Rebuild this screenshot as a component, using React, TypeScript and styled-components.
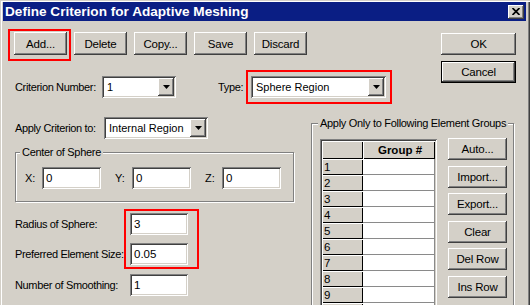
import React from 'react';
import styled, { createGlobalStyle, css } from 'styled-components';

const FACE = '#d4d0c8';

const raised = css`
  box-shadow: inset -1px -1px 0 #404040, inset 1px 1px 0 #ffffff,
    inset -2px -2px 0 #808080, inset 2px 2px 0 ${FACE};
`;

const sunken = css`
  box-shadow: inset 1px 1px 0 #808080, inset -1px -1px 0 #ffffff,
    inset 2px 2px 0 #404040, inset -2px -2px 0 ${FACE};
`;

const GlobalStyle = createGlobalStyle`
  * { box-sizing: border-box; }
  html, body {
    margin: 0;
    padding: 0;
    overflow: hidden;
    background: ${FACE};
  }
  body {
    font-family: "Liberation Sans", Arial, sans-serif;
    font-size: 11px;
    color: #000;
  }
`;

const Window = styled.div`
  width: 530px;
  height: 330px;
  background: ${FACE};
  padding: 2px 4px 0 3px;
  box-shadow: inset 1px 1px 0 ${FACE}, inset 2px 2px 0 #ffffff,
    inset -1px -1px 0 #404040, inset -2px -2px 0 #808080;
`;

const TitleBar = styled.div`
  height: 19px;
  background: #0a1e84;
  display: flex;
  align-items: center;
  justify-content: space-between;
  padding: 0 2px;
`;

const TitleText = styled.span`
  color: #ffffff;
  font-weight: bold;
  font-size: 13.6px;
  line-height: 19px;
`;

const CloseButton = styled.div`
  width: 16px;
  height: 14px;
  background: ${FACE};
  ${raised};
  display: flex;
  align-items: center;
  justify-content: center;
`;

const Content = styled.div`
  padding: 0 10px 0 12px;
`;

const TopArea = styled.div`
  display: flex;
  align-items: flex-start;
`;

const LeftTop = styled.div`
  display: flex;
  flex-direction: column;
`;

const Toolbar = styled.div`
  display: flex;
  gap: 7px;
  margin: 11px 0 0 -1px;
`;

const Button = styled.div<{ $w?: number; $h?: number; $default?: boolean }>`
  width: ${(p) => p.$w ?? 53}px;
  height: ${(p) => p.$h ?? 23}px;
  background: ${FACE};
  display: flex;
  align-items: center;
  justify-content: center;
  font-size: 11.5px;
  letter-spacing: -0.2px;
  ${(p) =>
    p.$default
      ? css`
          box-shadow: inset 0 0 0 1px #000000, inset -2px -2px 0 #404040,
            inset 2px 2px 0 #ffffff, inset -3px -3px 0 #808080;
        `
      : raised};
`;

const Highlight = styled.div<{ $t: number; $r: number; $b: number; $l: number }>`
  position: relative;
  width: fit-content;
  &::after {
    content: '';
    position: absolute;
    top: ${(p) => p.$t}px;
    right: ${(p) => p.$r}px;
    bottom: ${(p) => p.$b}px;
    left: ${(p) => p.$l}px;
    border: 2px solid #ff0000;
    pointer-events: none;
  }
`;

const DialogButtons = styled.div`
  margin: 12px 0 0 auto;
  display: flex;
  flex-direction: column;
  gap: 6px;
`;

const Row = styled.div<{ $mt?: number }>`
  display: flex;
  align-items: center;
  margin-top: ${(p) => p.$mt ?? 0}px;
`;

const Label = styled.span<{ $w?: number; $ml?: number }>`
  width: ${(p) => (p.$w ? `${p.$w}px` : 'auto')};
  margin-left: ${(p) => p.$ml ?? 0}px;
  flex-shrink: 0;
  white-space: nowrap;
  font-size: 11px;
  letter-spacing: -0.35px;
`;

const ComboBox = styled.div<{ $w: number }>`
  width: ${(p) => p.$w}px;
  height: 22px;
  background: #ffffff;
  ${sunken};
  padding: 2px;
  display: flex;
`;

const ComboValue = styled.span`
  flex: 1;
  padding-left: 3px;
  line-height: 18px;
  font-size: 11px;
  white-space: nowrap;
  overflow: hidden;
`;

const ComboArrow = styled.div`
  width: 16px;
  height: 18px;
  background: ${FACE};
  ${raised};
  display: flex;
  align-items: center;
  justify-content: center;
`;

const LowerArea = styled.div`
  display: flex;
  align-items: flex-start;
  margin-top: 19px;
`;

const LeftCol = styled.div`
  width: 279px;
  display: flex;
  flex-direction: column;
`;

const GroupBox = styled.fieldset<{ $w: number; $mt?: number; $ml?: number }>`
  width: ${(p) => p.$w}px;
  margin: ${(p) => p.$mt ?? 0}px 0 0 ${(p) => p.$ml ?? 0}px;
  padding: 0;
  min-width: 0;
  border: 1px solid #808080;
  box-shadow: inset 1px 1px 0 #ffffff, 1px 1px 0 #ffffff;
`;

const Legend = styled.legend<{ $ml: number }>`
  margin-left: ${(p) => p.$ml}px;
  padding: 0 2px;
  background: ${FACE};
  font-size: 11px;
  letter-spacing: -0.3px;
  line-height: 13px;
  white-space: nowrap;
`;

const CoordRow = styled.div`
  display: flex;
  gap: 14px;
  padding: 8px 0 12px 9px;
`;

const Coord = styled.div`
  display: flex;
  align-items: center;
`;

const CoordLabel = styled.span`
  width: 11px;
  margin-right: 6px;
  font-size: 11px;
`;

const TextField = styled.div<{ $w: number }>`
  width: ${(p) => p.$w}px;
  height: 22px;
  background: #ffffff;
  ${sunken};
  padding: 0 4px;
  font-size: 11.5px;
  line-height: 22px;
`;

const SizeRows = styled.div`
  display: flex;
  flex-direction: column;
  gap: 8px;
`;

const SizeSection = styled.div`
  margin-top: 11px;
  display: flex;
  flex-direction: column;
  gap: 9px;
`;

const GroupInner = styled.div`
  display: flex;
  gap: 11px;
  padding: 9px 0 0 8px;
`;

const GridTable = styled.div`
  width: 117px;
  padding: 2px 2px 0 2px;
  ${sunken};
  background: #808080;
  display: grid;
  grid-template-columns: 41px 72px;
  grid-template-rows: 18px;
  grid-auto-rows: 16px;
`;

const HeadCell = styled.div<{ $bold?: boolean }>`
  background: ${FACE};
  box-shadow: inset 1px 1px 0 #ffffff, inset -1px -1px 0 #000000;
  display: flex;
  align-items: center;
  justify-content: ${(p) => (p.$bold ? 'center' : 'flex-start')};
  padding-left: 2px;
  font-weight: ${(p) => (p.$bold ? 'bold' : 'normal')};
  font-size: 11.5px;
`;

const DataCell = styled.div`
  background: #ffffff;
  border-right: 1px solid #8a8a8a;
  border-bottom: 1px solid #8a8a8a;
`;

const SideButtons = styled.div`
  display: flex;
  flex-direction: column;
  gap: 5.5px;
  margin-top: -1px;
`;

const DownArrow = () => (
  <svg width="7" height="4" viewBox="0 0 7 4">
    <path d="M0 0h7L3.5 4z" fill="#000" />
  </svg>
);

const Combo = ({ w, value }: { w: number; value: string }) => (
  <ComboBox $w={w}>
    <ComboValue>{value}</ComboValue>
    <ComboArrow>
      <DownArrow />
    </ComboArrow>
  </ComboBox>
);

const sizeFields = [
  { label: 'Radius of Sphere:', value: '3' },
  { label: 'Preferred Element Size:', value: '0.05' },
];

const sideButtons = ['Auto...', 'Import...', 'Export...', 'Clear', 'Del Row', 'Ins Row'];

export default function App() {
  return (
    <>
      <GlobalStyle />
      <Window>
        <TitleBar>
          <TitleText>Define Criterion for Adaptive Meshing</TitleText>
          <CloseButton>
            <svg width="8" height="7" viewBox="0 0 8 7">
              <path d="M0.5 0L7.5 7M7.5 0L0.5 7" stroke="#000" strokeWidth="1.7" />
            </svg>
          </CloseButton>
        </TitleBar>
        <Content>
          <TopArea>
            <LeftTop>
              <Toolbar>
                <Highlight $t={-3} $r={-4} $b={-6} $l={-6}>
                  <Button>Add...</Button>
                </Highlight>
                <Button>Delete</Button>
                <Button>Copy...</Button>
                <Button>Save</Button>
                <Button>Discard</Button>
              </Toolbar>
              <Row $mt={21}>
                <Label $w={87}>Criterion Number:</Label>
                <Combo w={74} value="1" />
                <Label $w={33} $ml={42}>Type:</Label>
                <Highlight $t={-6} $r={-6} $b={-6} $l={-5}>
                  <Combo w={135} value="Sphere Region" />
                </Highlight>
              </Row>
            </LeftTop>
            <DialogButtons>
              <Button $w={75} $h={22}>OK</Button>
              <Button $w={75} $h={22} $default>Cancel</Button>
            </DialogButtons>
          </TopArea>
          <LowerArea>
            <LeftCol>
              <Row>
                <Label $w={89}>Apply Criterion to:</Label>
                <Combo w={104} value="Internal Region" />
              </Row>
              <GroupBox $w={279} $mt={7}>
                <Legend $ml={4}>Center of Sphere</Legend>
                <CoordRow>
                  {['X:', 'Y:', 'Z:'].map((c) => (
                    <Coord key={c}>
                      <CoordLabel>{c}</CoordLabel>
                      <TextField $w={59}>0</TextField>
                    </Coord>
                  ))}
                </CoordRow>
              </GroupBox>
              <SizeSection>
                <Highlight $t={-4} $r={-11} $b={-4} $l={109}>
                  <SizeRows>
                    {sizeFields.map((f) => (
                      <Row key={f.label}>
                        <Label $w={115}>{f.label}</Label>
                        <TextField $w={58}>{f.value}</TextField>
                      </Row>
                    ))}
                  </SizeRows>
                </Highlight>
                <Row>
                  <Label $w={115}>Number of Smoothing:</Label>
                  <TextField $w={58}>1</TextField>
                </Row>
              </SizeSection>
            </LeftCol>
            <GroupBox $w={203} $ml={17}>
              <Legend $ml={6}>Apply Only to Following Element Groups</Legend>
              <GroupInner>
                <GridTable>
                  <HeadCell />
                  <HeadCell $bold>Group #</HeadCell>
                  {Array.from({ length: 10 }, (_, i) => (
                    <React.Fragment key={i}>
                      <HeadCell>{i + 1}</HeadCell>
                      <DataCell />
                    </React.Fragment>
                  ))}
                </GridTable>
                <SideButtons>
                  {sideButtons.map((b) => (
                    <Button key={b} $w={59} $h={22}>
                      {b}
                    </Button>
                  ))}
                </SideButtons>
              </GroupInner>
            </GroupBox>
          </LowerArea>
        </Content>
      </Window>
    </>
  );
}
